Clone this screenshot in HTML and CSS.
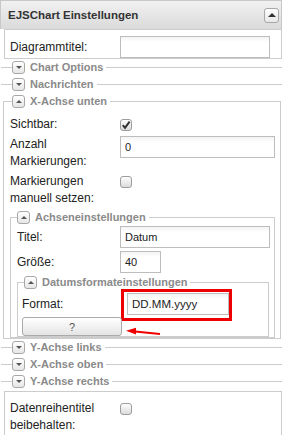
FILE: index.html
```html
<!DOCTYPE html>
<html lang="de">
<head>
    <meta charset="UTF-8">
    <meta name="viewport" content="width=device-width, initial-scale=1.0">
    <title>EJSChart Einstellungen</title>
    <link rel="stylesheet" href="styles.css">
</head>
<body>
    <div class="panel">
        <div class="panel-header">
            <span class="panel-title">EJSChart Einstellungen</span>
            <span class="header-btn"><span class="tri tri-up-lg"></span></span>
        </div>
        <div class="panel-body">
            <div class="box box-top">
                <div class="row">
                    <label class="lbl lbl-1">Diagrammtitel:</label>
                    <input class="txt w150" type="text">
                </div>
            </div>

            <fieldset class="sec collapsed">
                <legend><span class="legend-in"><span class="toggle"><span class="tri tri-down"></span></span>Chart Options</span></legend>
            </fieldset>
            <fieldset class="sec collapsed">
                <legend><span class="legend-in"><span class="toggle"><span class="tri tri-down"></span></span>Nachrichten</span></legend>
            </fieldset>

            <fieldset class="sec lvl1">
                <legend><span class="legend-in"><span class="toggle"><span class="tri tri-up"></span></span>X-Achse unten</span></legend>
                <div class="row">
                    <label class="lbl lbl-1">Sichtbar:</label>
                    <span class="check"><svg width="10" height="10" viewBox="0 0 10 10"><path d="M1.8 5.2 L4 7.8 L8.6 1.6" fill="none" stroke="#333" stroke-width="2"/></svg></span>
                </div>
                <div class="row multi">
                    <label class="lbl lbl-1">Anzahl<br>Markierungen:</label>
                    <input class="txt w155" type="text" value="0">
                </div>
                <div class="row multi">
                    <label class="lbl lbl-1">Markierungen<br>manuell setzen:</label>
                    <span class="check check-low"></span>
                </div>

                <fieldset class="sec lvl2">
                    <legend><span class="legend-in"><span class="toggle"><span class="tri tri-up"></span></span>Achseneinstellungen</span></legend>
                    <div class="row">
                        <label class="lbl lbl-2">Titel:</label>
                        <input class="txt w150" type="text" value="Datum">
                    </div>
                    <div class="row row-size">
                        <label class="lbl lbl-2">Größe:</label>
                        <input class="txt w41" type="text" value="40">
                    </div>

                    <fieldset class="sec lvl3">
                        <legend><span class="legend-in"><span class="toggle"><span class="tri tri-up"></span></span>Datumsformateinstellungen</span></legend>
                        <div class="row row-format">
                            <label class="lbl lbl-3">Format:</label>
                            <span class="highlight"><input class="txt txt-format w102" type="text" value="DD.MM.yyyy"></span>
                        </div>
                        <div class="help-row">
                            <button class="btn-help" type="button">?</button>
                            <svg class="arrow" width="40" height="12" viewBox="0 0 40 12">
                                <path d="M11 6.6 L36 9" stroke="#e00" stroke-width="2" fill="none"/>
                                <path d="M2 5.8 L12 2.8 L12 9.6 Z" fill="#e00"/>
                            </svg>
                        </div>
                    </fieldset>
                </fieldset>
            </fieldset>

            <fieldset class="sec collapsed after">
                <legend><span class="legend-in"><span class="toggle"><span class="tri tri-down"></span></span>Y-Achse links</span></legend>
            </fieldset>
            <fieldset class="sec collapsed">
                <legend><span class="legend-in"><span class="toggle"><span class="tri tri-down"></span></span>X-Achse oben</span></legend>
            </fieldset>
            <fieldset class="sec collapsed">
                <legend><span class="legend-in"><span class="toggle"><span class="tri tri-down"></span></span>Y-Achse rechts</span></legend>
            </fieldset>

            <div class="box box-bottom">
                <div class="row multi">
                    <label class="lbl lbl-1">Datenreihentitel<br>beibehalten:</label>
                    <span class="check check-low"></span>
                </div>
            </div>
        </div>
    </div>
</body>
</html>
```

FILE: styles.css
```css
body {
    margin: 0;
    background-color: #fff;
    font-family: "Liberation Sans", Arial, sans-serif;
    font-size: 12px;
    color: #222;
}
.panel {
    width: 282px;
}
.panel-header {
    box-sizing: border-box;
    height: 29px;
    display: flex;
    align-items: center;
    justify-content: space-between;
    padding: 0 2px 0 7px;
    border: 1px solid #c8c8c8;
    border-bottom: none;
    background: linear-gradient(#f1f1f1, #dadada);
}
.panel-title {
    font-weight: bold;
    font-size: 11.5px;
    color: #333;
}
.header-btn {
    box-sizing: border-box;
    width: 15px;
    height: 15px;
    display: flex;
    align-items: center;
    justify-content: center;
    border: 1px solid #a8a8a8;
    border-radius: 3px;
    background: linear-gradient(#fdfdfd, #e8e8e8);
}
.tri {
    width: 0;
    height: 0;
    border-left: 3px solid transparent;
    border-right: 3px solid transparent;
}
.tri-up {
    border-bottom: 3px solid #555;
}
.tri-down {
    border-top: 3px solid #555;
}
.tri-up-lg {
    border-left-width: 4px;
    border-right-width: 4px;
    border-bottom: 4px solid #333;
}
.panel-body {
    padding-left: 3px;
}
.box {
    margin-left: 1px;
    border: 1px solid #ccc;
    padding-left: 5px;
}
.box-top {
    padding-top: 6px;
    height: 22px;
}
.box-bottom {
    margin-top: 3px;
    padding-top: 8px;
    height: 40px;
}
.row {
    display: flex;
    align-items: center;
    margin-bottom: 3px;
}
.row.multi {
    align-items: flex-start;
}
.lbl {
    flex: none;
    line-height: 17px;
}
.lbl-1 {
    width: 110px;
}
.lbl-2 {
    width: 103px;
}
.lbl-3 {
    width: 105px;
}
.txt {
    box-sizing: border-box;
    height: 22px;
    margin: 0;
    padding: 0 4px;
    border: 1px solid #bdbdbd;
    background: linear-gradient(#f3f3f3, #fff 5px);
    font-family: "Liberation Sans", Arial, sans-serif;
    font-size: 11px;
    color: #222;
    outline: none;
}
.w150 { width: 150px; }
.w155 { width: 155px; }
.w41 { width: 41px; }
.w102 { width: 102px; }
.txt-format {
    font-size: 11.5px;
}
.check {
    box-sizing: border-box;
    width: 12px;
    height: 12px;
    display: flex;
    align-items: center;
    justify-content: center;
    border: 1px solid #9d9d9d;
    border-radius: 3px;
    background: linear-gradient(#fdfdfd, #dcdcdc);
}
.check-low {
    margin-top: 3px;
}
.sec {
    min-inline-size: 0;
    margin: 0;
    border: 1px solid #ccc;
}
.sec legend {
    padding: 0 3px 0 0;
    font-size: 11px;
    font-weight: bold;
    color: #8a8a8a;
}
.legend-in {
    display: flex;
    align-items: center;
    height: 14px;
}
.toggle {
    box-sizing: border-box;
    width: 13px;
    height: 13px;
    margin-right: 5px;
    display: flex;
    align-items: center;
    justify-content: center;
    border: 1px solid #a8a8a8;
    border-radius: 3px;
    background: linear-gradient(#fff, #e6e6e6);
}
.collapsed {
    margin: 1px 0 3px -2px;
    padding: 0 0 0 11px;
    border-width: 1px 0 0 0;
}
.collapsed.after {
    margin-top: 1px;
}
.lvl1 {
    margin: 0 1px 0 0;
    padding: 8px 5px 0 6px;
}
.lvl1 > legend {
    margin-left: 2px;
}
.lvl2 {
    padding: 2px 5px 0 6px;
}
.row-size {
    margin-bottom: 2px;
}
.lvl3 {
    padding: 4px 0 0 4px;
}
.lvl3 > legend {
    margin-left: 2px;
}
.row-format {
    margin-bottom: 2px;
}
.highlight {
    position: relative;
    display: flex;
}
.highlight::after {
    content: "";
    position: absolute;
    left: -6px;
    top: -4px;
    right: -3px;
    bottom: -6px;
    border: 3px solid #e00;
}
.help-row {
    position: relative;
    height: 19px;
}
.btn-help {
    box-sizing: border-box;
    width: 100px;
    height: 19px;
    margin: 0;
    padding: 0;
    border: 1px solid #aaa;
    border-radius: 3px;
    background: linear-gradient(#fff, #e4e4e4);
    font-family: "Liberation Sans", Arial, sans-serif;
    font-size: 11px;
    color: #555;
}
.arrow {
    position: absolute;
    left: 102px;
    top: 8px;
}
```
